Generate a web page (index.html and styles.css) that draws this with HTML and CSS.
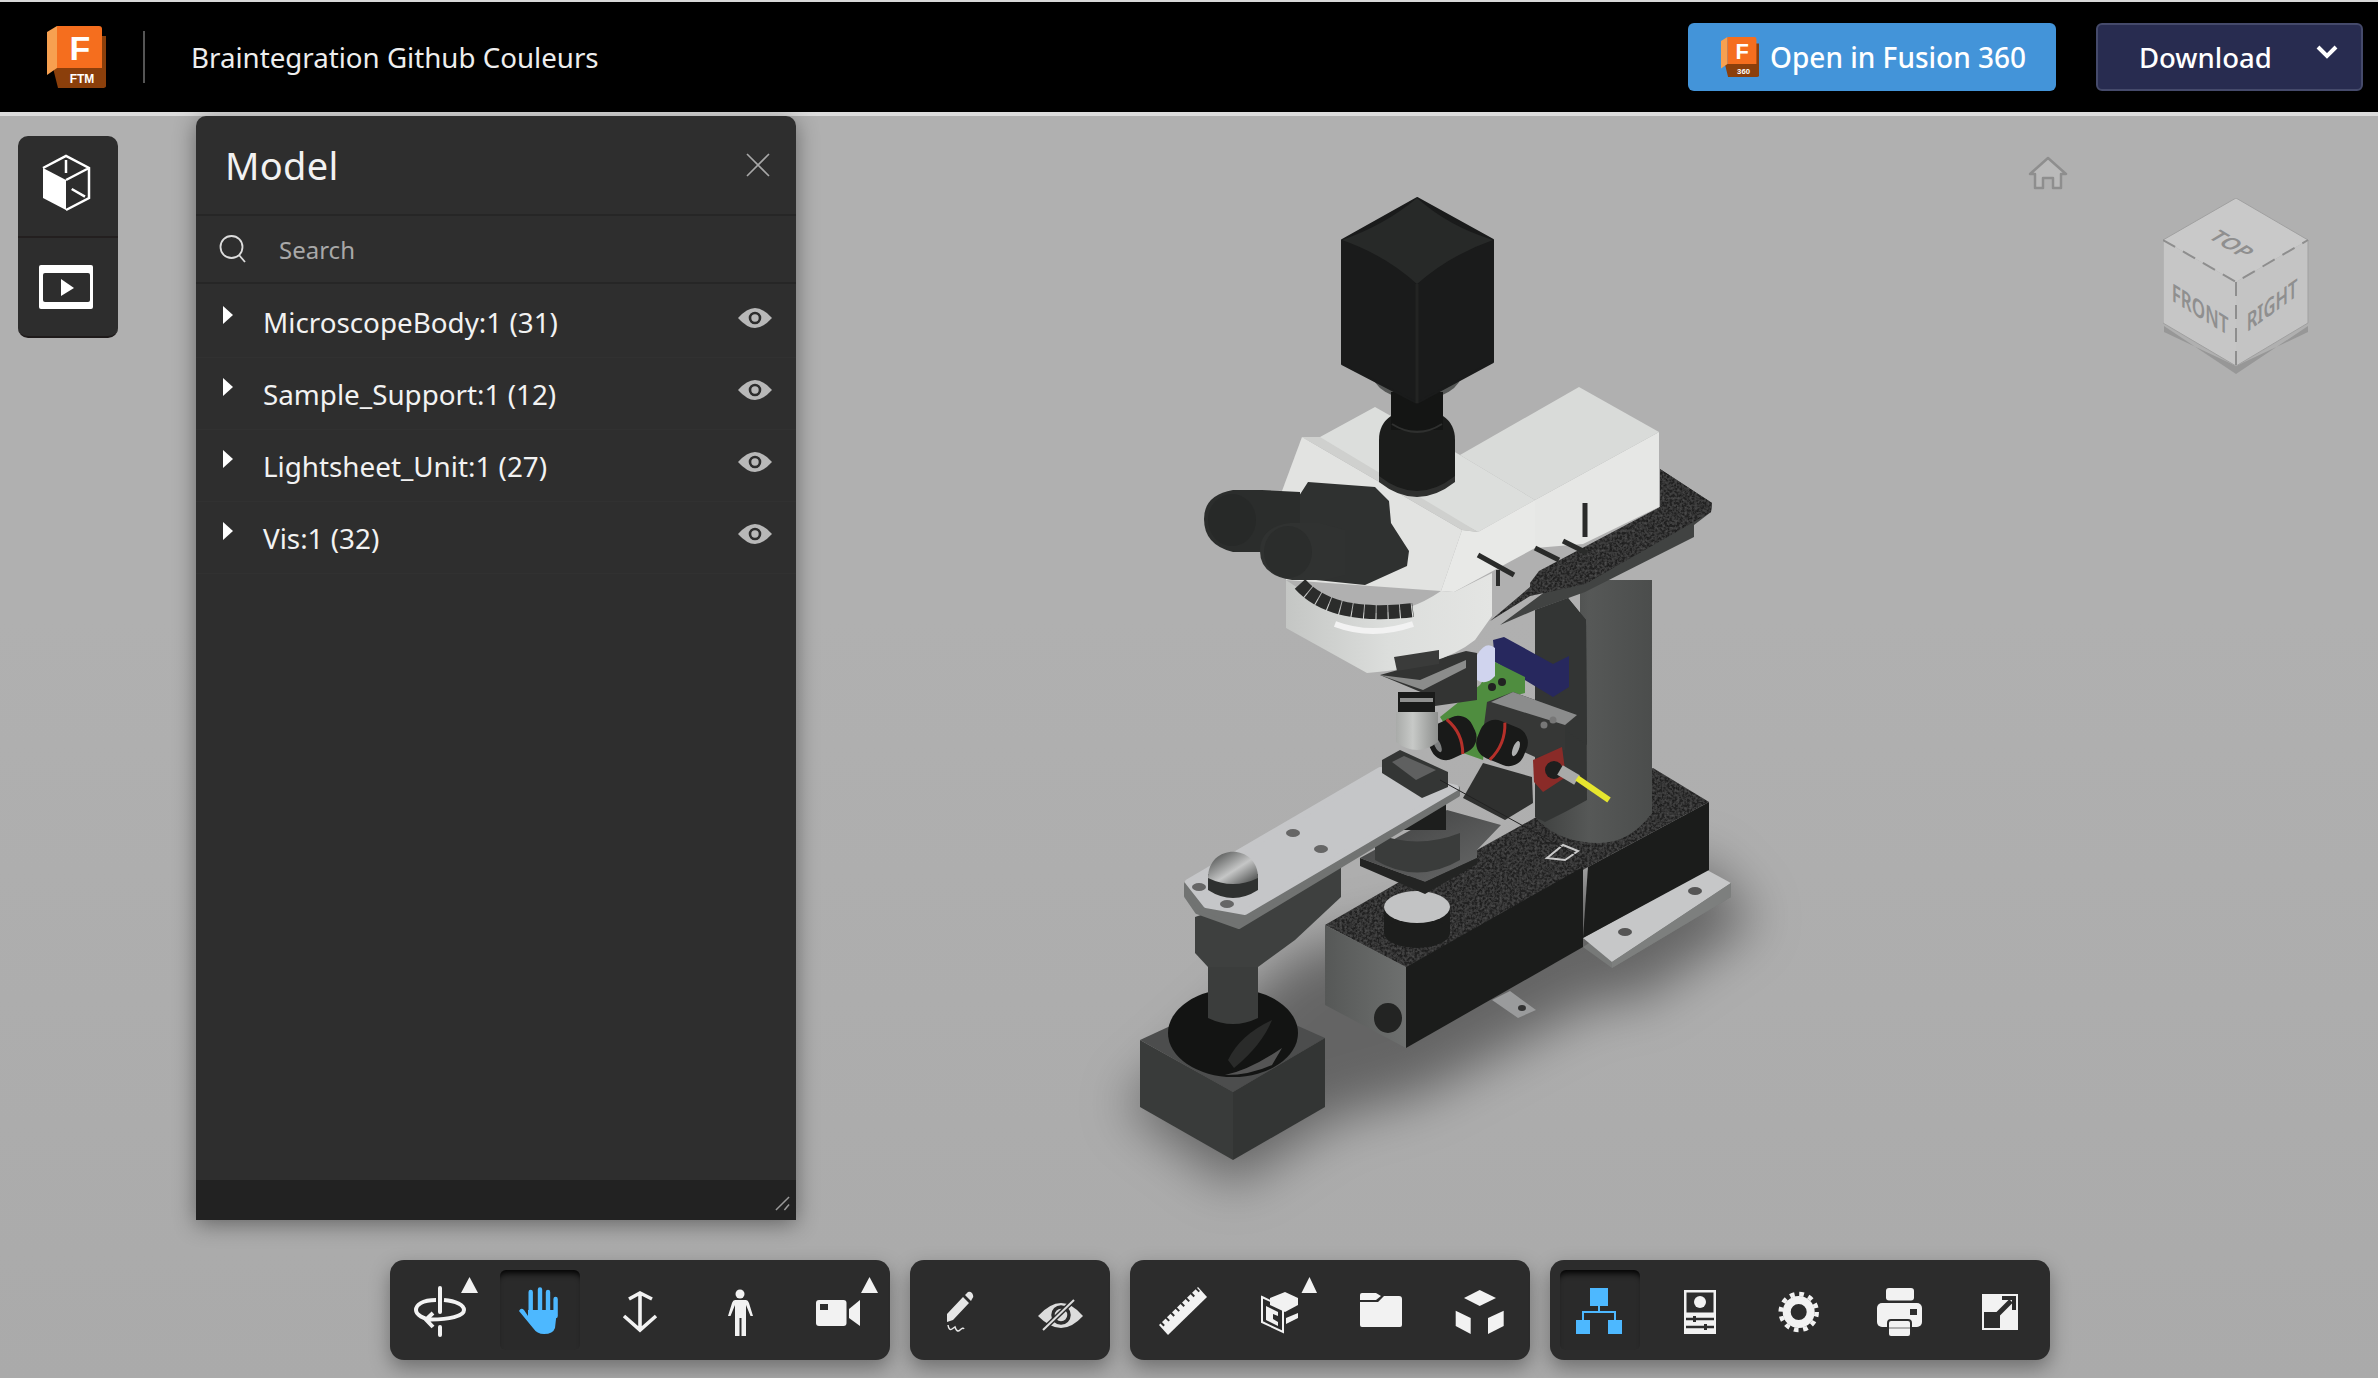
FILE: index.html
```html
<!DOCTYPE html>
<html lang="en">
<head>
  <meta charset="UTF-8">
  <title>Braintegration Github Couleurs</title>
  <link rel="stylesheet" href="styles.css">
</head>
<body>

  <header class="topbar">
    <svg class="logo" viewBox="0 0 59 62">
      <path d="M6 42 L11 62 H55 Q59 62 59 60 V10 H50 V42Z" fill="#8b3f0b"/>
      <path d="M0 6 L10 0 V42 L0 49Z" fill="#f7a050"/>
      <path d="M10 0 H52 Q55 0 55 3 V42 H10Z" fill="#f56e1e"/>
      <text class="logo-f" x="33" y="34">F</text>
      <text class="logo-sub" x="35" y="57">FTM</text>
    </svg>
    <div class="divider"></div>
    <div class="doc-title">Braintegration Github Couleurs</div>
    <button class="btn-open">
      <svg class="logo-small" viewBox="0 0 59 62">
        <path d="M6 42 L11 62 H55 Q59 62 59 60 V10 H50 V42Z" fill="#8b3f0b"/>
        <path d="M0 6 L10 0 V42 L0 49Z" fill="#f7a050"/>
        <path d="M10 0 H52 Q55 0 55 3 V42 H10Z" fill="#f56e1e"/>
        <text class="logo-f" x="33" y="34">F</text>
        <text class="logo-sub" x="35" y="58">360</text>
      </svg>
      Open in Fusion 360
    </button>
    <button class="btn-download">
      Download
      <svg class="chevron" viewBox="0 0 22 14"><path d="M2 2 L11 11 L20 2" fill="none" stroke="#fff" stroke-width="4"/></svg>
    </button>
  </header>

  <main class="viewer">

    <!-- the model, drawn in page coordinates -->
    <svg class="model" viewBox="0 116 2378 1262">
      <defs>
        <filter id="soft" x="-30%" y="-30%" width="160%" height="160%"><feGaussianBlur stdDeviation="26"/></filter>
        <filter id="pebble" x="0" y="0" width="100%" height="100%">
          <feTurbulence type="fractalNoise" baseFrequency="0.4" numOctaves="2" seed="4"/>
          <feColorMatrix values="0 0 0 0 0.14  0 0 0 0 0.14  0 0 0 0 0.14  0 0 0 0.9 -0.3"/>
          <feComposite in2="SourceGraphic" operator="in"/>
          <feMerge><feMergeNode in="SourceGraphic"/><feMergeNode/></feMerge>
        </filter>
        <linearGradient id="column" x1="0" x2="1" y1="0" y2="0">
          <stop offset="0" stop-color="#3f4140"/><stop offset=".45" stop-color="#565857"/><stop offset="1" stop-color="#4b4d4c"/>
        </linearGradient>
        <linearGradient id="nose" x1="0" x2="1" y1="0" y2="0">
          <stop offset="0" stop-color="#c4c6c4"/><stop offset=".5" stop-color="#dcdedc"/><stop offset="1" stop-color="#e4e5e3"/>
        </linearGradient>
        <linearGradient id="silver" x1="0" x2="1" y1="0" y2="0">
          <stop offset="0" stop-color="#a9aba9"/><stop offset=".4" stop-color="#c7c9c7"/><stop offset="1" stop-color="#8d8f8d"/>
        </linearGradient>
        <linearGradient id="dome" x1="0" x2="1" y1="0" y2="1">
          <stop offset="0" stop-color="#3c3e3d"/><stop offset=".55" stop-color="#c5c6c6"/><stop offset="1" stop-color="#3c3e3d"/>
        </linearGradient>
        <linearGradient id="sideFace" x1="0" x2="1" y1="0" y2="0">
          <stop offset="0" stop-color="#565857"/><stop offset="1" stop-color="#6e706f"/>
        </linearGradient>
        <linearGradient id="plate" x1="0" x2="1" y1="0" y2="1">
          <stop offset="0" stop-color="#3d3e3e"/><stop offset="1" stop-color="#6a6b6b"/>
        </linearGradient>
      </defs>

      <!-- floor shadow -->
      <polygon filter="url(#soft)" fill="#000" fill-opacity=".42" points="1125,1105 1233,1185 1335,1118 1420,1095 1600,1000 1640,1000 1755,920 1700,860 1300,950"/>

      <!-- base -->
      <polygon points="1583,947 1612,968 1731,897 1731,883 1700,870" fill="#777978"/>
      <polygon points="1583,938 1707,870 1731,883 1612,962" fill="#c6c7c8"/>
      <polygon points="1612,962 1731,883 1731,897 1612,968" fill="#7d7f7e"/>
      <ellipse cx="1695" cy="891" rx="7" ry="4" fill="#555"/>
      <ellipse cx="1625" cy="932" rx="7" ry="4" fill="#555"/>
      <polygon points="1588,867 1709,802 1709,870 1583,938" fill="#1b1c1b"/>
      <polygon points="1325,925 1420,870 1477,850 1540,815 1653,768 1709,802 1588,867 1406,967" fill="#242424" filter="url(#pebble)"/>
      <polygon points="1325,925 1406,967 1406,1048 1325,1005" fill="url(#sideFace)"/>
      <polygon points="1406,967 1583,867 1583,947 1406,1048" fill="#1b1c1b"/>
      <ellipse cx="1388" cy="1018" rx="14" ry="15" fill="#232423"/>
      <polygon points="1492,1000 1510,991 1536,1010 1518,1018" fill="#9a9b9c"/>
      <ellipse cx="1522" cy="1008" rx="4" ry="3" fill="#333"/>
      <path d="M1547 858 L1563 845 L1578 851 L1565 860 Z" fill="none" stroke="#c9c9c9" stroke-width="2"/>

      <!-- column and rear bracket -->
      <path d="M1580 580 H1652 V813 Q1630 843 1599 843 Q1560 843 1538 820 L1580 800Z" fill="url(#column)"/>
      <polygon points="1535,610 1568,598 1586,620 1587,800 1565,812 1545,822 1535,817" fill="#333534"/>

      <!-- lower stage parts -->
      <polygon points="1483,763 1532,777 1533,803 1505,820 1463,798" fill="#2f302f"/>
      <rect x="1384" y="907" width="66" height="26" fill="#1c1d1c"/>
      <ellipse cx="1417" cy="933" rx="33" ry="15" fill="#1c1d1c"/>
      <ellipse cx="1417" cy="907" rx="33" ry="16" fill="#c2c3c4"/>
      <polygon points="1360,858 1447,810 1501,825 1477,850 1477,858 1425,882" fill="url(#plate)"/>
      <polygon points="1360,858 1425,882 1477,858 1477,864 1425,894 1360,866" fill="#232423"/>
      <path d="M1375 833 V860 Q1417 885 1460 860 V833 Q1417 850 1375 833Z" fill="#3a3c3b"/>
      <rect x="1400" y="795" width="46" height="35" fill="#1d1e1d"/>

      <!-- stage arm, post and foot -->
      <polygon points="1140,1040 1233,997 1325,1038 1233,1092" fill="#4c4d4d"/>
      <polygon points="1140,1040 1233,1092 1233,1160 1140,1107" fill="#393b3a"/>
      <polygon points="1325,1038 1325,1107 1233,1160 1233,1092" fill="#333534"/>
      <ellipse cx="1233" cy="1033" rx="65" ry="44" fill="#131413"/>
      <path d="M1228 1060 Q1240 1035 1272 1020 Q1262 1045 1234 1068Z" fill="#2a2b2a"/>
      <path d="M1225 1075 Q1250 1070 1282 1048 L1272 1065 Q1250 1075 1225 1075Z" fill="#555"/>
      <path d="M1208 960 H1258 V1018 Q1233 1030 1208 1018Z" fill="#3b3d3c"/>
      <polygon points="1195,917 1195,953 1208,967 1258,967 1295,940 1341,897 1341,867" fill="#3e403f"/>
      <polygon points="1186,884 1186,896 1197,912 1239,927 1458,795 1458,788" fill="#717372" stroke="#717372" stroke-width="4" stroke-linejoin="round"/>
      <polygon points="1188,882 1380,770 1456,788 1245,912 1206,905" fill="#c5c6c8" stroke="#c5c6c8" stroke-width="6" stroke-linejoin="round"/>
      <ellipse cx="1293" cy="833" rx="7" ry="4" fill="#666"/>
      <ellipse cx="1321" cy="849" rx="7" ry="4" fill="#666"/>
      <ellipse cx="1199" cy="887" rx="7" ry="4" fill="#666"/>
      <ellipse cx="1227" cy="904" rx="7" ry="4" fill="#666"/>
      <path d="M1208 874 H1258 V890 Q1233 906 1208 890Z" fill="#2f3130"/>
      <path d="M1208 878 C1208 843 1258 843 1258 878 Q1233 890 1208 878Z" fill="url(#dome)"/>

      <!-- focus optics -->
      <polygon points="1535,610 1568,598 1586,620 1587,745 1565,730 1535,700" fill="#333534"/>
      <polygon points="1493,640 1504,637 1553,664 1569,656 1569,687 1553,697 1495,662" fill="#27285e"/>
      <polygon points="1480,685 1495,662 1525,677 1525,693 1490,702 1483,760 1463,753 1440,717" fill="#4f8d3f"/>
      <path d="M1477 655 Q1486 640 1495 648 V676 Q1486 686 1477 680Z" fill="#d0d4ee"/>
      <circle cx="1492" cy="687" r="4" fill="#222"/>
      <circle cx="1502" cy="682" r="4" fill="#222"/>
      <polygon points="1487,702 1513,692 1577,715 1565,727 1565,750 1535,757 1483,733" fill="#363736"/>
      <polygon points="1491,702 1513,692 1577,715 1565,725" fill="#8b8c8c"/>
      <circle cx="1544" cy="725" r="3.5" fill="#777"/>
      <circle cx="1553" cy="720" r="3.5" fill="#777"/>
      <g transform="rotate(-25 1452 738)">
        <rect x="1428" y="719" width="48" height="38" rx="16" fill="#191a19"/>
        <path d="M1455 719 Q1464 738 1455 757" fill="none" stroke="#b5302a" stroke-width="3"/>
        <ellipse cx="1436" cy="738" rx="3" ry="8" fill="#7c7e7e"/>
      </g>
      <g transform="rotate(22 1502 743)">
        <rect x="1477" y="723" width="50" height="40" rx="16" fill="#191a19"/>
        <path d="M1497 723 Q1506 743 1497 763" fill="none" stroke="#b5302a" stroke-width="3"/>
        <ellipse cx="1517" cy="743" rx="3" ry="8" fill="#aeb0b0"/>
      </g>
      <polygon points="1533,760 1562,747 1566,777 1543,792 1534,782" fill="#8a2b28"/>
      <circle cx="1554" cy="770" r="9" fill="#1e1f1e"/>
      <line x1="1560" y1="770" x2="1577" y2="780" stroke="#a9aaa9" stroke-width="11"/>
      <line x1="1577" y1="778" x2="1609" y2="800" stroke="#e6e62e" stroke-width="6"/>

      <!-- nosepiece bracket, objective and plate -->
      <polygon points="1380,675 1423,693 1428,707 1477,700 1477,653 1466,651" fill="#333433"/>
      <polygon points="1380,675 1423,690 1466,668 1466,660 1420,680" fill="#8b8c8b"/>
      <rect x="1398" y="692" width="37" height="22" fill="#1a1b1a"/>
      <rect x="1400" y="698" width="33" height="4" fill="#8f908f"/>
      <path d="M1396 712 H1438 V742 Q1417 758 1396 742Z" fill="url(#silver)"/>
      <polygon points="1382,760 1400,750 1448,772 1448,787 1422,798 1382,773" fill="#343635"/>
      <polygon points="1392,762 1404,756 1436,770 1416,780" fill="#5f6060"/>
      <line x1="1440" y1="780" x2="1585" y2="860" stroke="#222" stroke-width="1"/>
      <polygon points="1660,469 1712,503 1711,512 1694,525 1694,537 1585,592 1535,610 1500,625 1660,507" fill="#414342"/>
      <polygon points="1660,469 1712,503 1711,512 1585,584 1530,596 1490,621 1530,587 1530,583 1539,571 1660,507" fill="#202020" filter="url(#pebble)"/>

      <!-- microscope head -->
      <polygon points="1659,432 1659,507 1583,544 1535,548 1535,500" fill="#e6e7e5"/>
      <polygon points="1579,387 1659,432 1535,500 1460,455" fill="#d9dbd9"/>
      <polygon points="1320,437 1375,407 1460,455 1535,500 1478,532 1302,437" fill="#dcdedc"/>
      <polygon points="1462,530 1478,532 1535,500 1535,548 1454,592 1441,591" fill="#e8e9e7"/>
      <polygon points="1302,437 1282,491 1286,580 1441,591 1462,530" fill="#e2e3e1"/>
      <polygon points="1302,437 1320,437 1478,532 1462,530" fill="#cfd0ce"/>
      <path d="M1286 580 V628 L1367 673 Q1440 668 1475 640 L1492 616 V573 L1454 592 L1441 591 Q1370 640 1286 580Z" fill="url(#nose)"/>
      <path d="M1300 584 Q1332 620 1413 610" fill="none" stroke="#2b2c2b" stroke-width="14" stroke-dasharray="11 1"/>
      <path d="M1335 624 Q1372 638 1413 624" fill="none" stroke="#f2f2f2" stroke-width="6"/>
      <polygon points="1394,657 1439,650 1439,664 1397,671" fill="#3a3b3a"/>

      <!-- camera and tube -->
      <ellipse cx="1417" cy="372" rx="45" ry="28" fill="#555756"/>
      <path d="M1379 440 Q1379 424 1391 416 H1443 Q1455 424 1455 440 V480 Q1417 510 1379 480Z" fill="#1b1c1b"/>
      <path d="M1379 476 Q1417 506 1455 476 V482 Q1417 512 1379 482Z" fill="#2f302f"/>
      <rect x="1391" y="392" width="52" height="38" fill="#141514"/>
      <path d="M1392 424 Q1417 440 1442 424" fill="none" stroke="#2f302f" stroke-width="2"/>
      <polygon points="1417,198 1493,240 1493,362 1417,403 1342,364 1342,240" fill="#1a1b1b" stroke="#1a1b1b" stroke-width="2" stroke-linejoin="round"/>
      <path d="M1417 198 Q1448 226 1493 240 Q1450 255 1417 284 Q1385 255 1342 240 Q1385 225 1417 198Z" fill="#272928"/>
      <line x1="1417" y1="284" x2="1417" y2="403" stroke="#232423" stroke-width="3"/>

      <!-- eyepieces -->
      <path d="M1308 482 L1375 487 L1389 501 L1391 523 L1409 551 L1407 566 L1365 585 L1316 580 L1280 560 L1290 510Z" fill="#2f3130"/>
      <path d="M1233 490 H1262 L1300 492 V545 L1262 552 H1233 Q1204 545 1204 519 Q1204 495 1233 490Z" fill="#2b2d2c"/>
      <ellipse cx="1232" cy="520" rx="24" ry="26" fill="#272928"/>
      <path d="M1290 523 H1320 L1345 530 V575 L1325 580 H1292 Q1260 575 1260 551 Q1260 527 1290 523Z" fill="#303231"/>
      <ellipse cx="1288" cy="552" rx="24" ry="26" fill="#2b2d2c"/>

      <!-- small levers -->
      <line x1="1478" y1="555" x2="1514" y2="575" stroke="#2a2b2a" stroke-width="5"/>
      <line x1="1498" y1="570" x2="1498" y2="586" stroke="#2a2b2a" stroke-width="4"/>
      <line x1="1535" y1="548" x2="1559" y2="560" stroke="#2a2b2a" stroke-width="5"/>
      <line x1="1563" y1="541" x2="1587" y2="553" stroke="#2a2b2a" stroke-width="5"/>
      <line x1="1585" y1="503" x2="1585" y2="537" stroke="#2a2b2a" stroke-width="5"/>
    </svg>

    <svg class="home" viewBox="0 0 40 34">
      <path d="M20 2 L38 18 H33 V32 H25 V22 H15 V32 H7 V18 H2Z" fill="#bababa" stroke="#8e8e8e" stroke-width="2.5" stroke-linejoin="round"/>
    </svg>

    <svg class="viewcube" viewBox="0 0 146 176">
      <polygon points="1,128 73,176 145,128 145,134 73,168 1,134" fill="#979797"/>
      <polygon points="73,0 145,42 73,84 0,42" fill="#c9c9c9"/>
      <polygon points="0,42 73,84 73,168 0,125" fill="#c6c6c6"/>
      <polygon points="145,42 73,84 73,168 145,125" fill="#c4c4c4"/>
      <path d="M0 42 L73 0 L145 42 V125 L73 168 L0 125Z" fill="none" stroke="#a0a0a0" stroke-width="1"/>
      <path d="M0 42 L73 84 L145 42 M73 84 V168" fill="none" stroke="#8e8e8e" stroke-width="2" stroke-dasharray="14 9"/>
      <text class="cube-label" transform="matrix(.8 .48 -.8 .48 62 50)" text-anchor="middle">TOP</text>
      <text class="cube-label" transform="matrix(.74 .46 0 1.08 37 120)" text-anchor="middle">FRONT</text>
      <text class="cube-label" transform="matrix(.72 -.52 0 1.08 109 116)" text-anchor="middle">RIGHT</text>
    </svg>

    <div class="side-tools">
      <button class="side-btn">
        <svg viewBox="0 0 100 100" width="100" height="100">
          <path d="M25 32 L48 44 V74 L25 62Z" fill="#fff"/>
          <path d="M25 32 L48 20 L71 32 V62 L48 74 M48 44 L71 32 M48 24 V37 M53.7 53 L67 60.7" fill="none" stroke="#fff" stroke-width="2.5"/>
        </svg>
      </button>
      <button class="side-btn">
        <svg viewBox="0 0 100 100" width="100" height="100">
          <rect x="21" y="27" width="54" height="44" rx="2" fill="#fff"/>
          <rect x="25" y="35" width="47" height="29" rx="2" fill="#2d2d2d"/>
          <polygon points="43,41 56,50 43,58" fill="#fff"/>
        </svg>
      </button>
    </div>

    <section class="panel">
      <div class="panel-head">
        <h2>Model</h2>
        <svg class="panel-close" viewBox="0 0 24 24"><path d="M1 1 L23 23 M23 1 L1 23" stroke="#a8a8a8" stroke-width="1.6"/></svg>
      </div>
      <div class="panel-search">
        <svg viewBox="0 0 28 28" width="28" height="28"><circle cx="12.5" cy="12" r="11" fill="none" stroke="#ddd" stroke-width="1.8"/><line x1="20" y1="20" x2="26" y2="27" stroke="#ddd" stroke-width="1.8"/></svg>
        <span>Search</span>
      </div>
      <div class="panel-list">
        <div class="tree-row">
          <span class="caret"></span><span class="tree-name">MicroscopeBody:1 (31)</span>
          <svg class="eye" viewBox="0 0 34 20"><path d="M0 10 Q9 0 17 0 Q25 0 34 10 Q25 20 17 20 Q9 20 0 10Z" fill="#b8b8b8"/><circle cx="17" cy="10" r="5" fill="none" stroke="#2d2d2d" stroke-width="2.6"/></svg>
        </div>
        <div class="tree-row">
          <span class="caret"></span><span class="tree-name">Sample_Support:1 (12)</span>
          <svg class="eye" viewBox="0 0 34 20"><path d="M0 10 Q9 0 17 0 Q25 0 34 10 Q25 20 17 20 Q9 20 0 10Z" fill="#b8b8b8"/><circle cx="17" cy="10" r="5" fill="none" stroke="#2d2d2d" stroke-width="2.6"/></svg>
        </div>
        <div class="tree-row">
          <span class="caret"></span><span class="tree-name">Lightsheet_Unit:1 (27)</span>
          <svg class="eye" viewBox="0 0 34 20"><path d="M0 10 Q9 0 17 0 Q25 0 34 10 Q25 20 17 20 Q9 20 0 10Z" fill="#b8b8b8"/><circle cx="17" cy="10" r="5" fill="none" stroke="#2d2d2d" stroke-width="2.6"/></svg>
        </div>
        <div class="tree-row">
          <span class="caret"></span><span class="tree-name">Vis:1 (32)</span>
          <svg class="eye" viewBox="0 0 34 20"><path d="M0 10 Q9 0 17 0 Q25 0 34 10 Q25 20 17 20 Q9 20 0 10Z" fill="#b8b8b8"/><circle cx="17" cy="10" r="5" fill="none" stroke="#2d2d2d" stroke-width="2.6"/></svg>
        </div>
      </div>
      <div class="panel-foot">
        <svg viewBox="0 0 16 16" width="15" height="15"><path d="M1 15 L15 1 M10 15 L15 9" stroke="#9a9a9a" stroke-width="1.6"/></svg>
      </div>
    </section>

    <div class="toolbar">
      <div class="tool-group">
        <button class="tool">
          <svg viewBox="0 0 80 80">
            <path d="M40 18 V42 M40 57 V65" stroke="#f2f2f2" stroke-width="4" stroke-linecap="round"/>
            <path d="M36 30 C22 30 16 35 16 40 C16 45 24 49 31 50 M44 30 C56 31 64 35 64 40 C64 46 50 50 27 49.5 M33 43 L26 49.5 L33 57" fill="none" stroke="#f2f2f2" stroke-width="4"/>
            <polygon points="69.5,7 61,23 78,23" fill="#f2f2f2"/>
          </svg>
        </button>
        <button class="tool active">
          <svg viewBox="0 0 80 80">
            <path d="M30.7 44 V22 M40 44 V19.5 M48 44 V22 M55.6 46 V29" stroke="#4db8ff" stroke-width="4.4" stroke-linecap="round"/>
            <path d="M28 40 L57 40 L55 58 Q53 64 44 64 Q37 64 33 58 L19 41 Q21 37 24 40 L28 46Z" fill="#4db8ff"/>
          </svg>
        </button>
        <button class="tool">
          <svg viewBox="0 0 80 80">
            <path d="M40 23 V58 M29 29 L40 23 L52 29 M24 46 L40 60 L56 46" fill="none" stroke="#f2f2f2" stroke-width="3.6"/>
          </svg>
        </button>
        <button class="tool">
          <svg viewBox="0 0 80 80">
            <ellipse cx="40" cy="24" rx="4.5" ry="4.5" fill="#f2f2f2"/>
            <path d="M34 30 h12 q2 0 3 3 l4 13 h-2.5 l-4.5 -11 v31 h-4.5 v-18 h-2 v18 h-4.5 v-31 l-4.5 11 h-2.5 l4 -13 q1 -3 3 -3z" fill="#f2f2f2"/>
          </svg>
        </button>
        <button class="tool">
          <svg viewBox="0 0 80 80">
            <rect x="16" y="30" width="30.5" height="26" rx="3" fill="#f2f2f2"/>
            <rect x="20" y="34" width="8" height="6" fill="#2d2d2d"/>
            <polygon points="49,39 60,30 60,56 49,48" fill="#f2f2f2"/>
            <polygon points="69.5,7 61,23 78,23" fill="#f2f2f2"/>
          </svg>
        </button>
      </div>
      <div class="tool-group">
        <button class="tool">
          <svg viewBox="0 0 80 80">
            <path d="M27 52 V44 L43 27 L49 33 L33 50Z M45 25 L48 22 Q50 21 52 23 L53 25 Q54 27 52 29 L51 31Z" fill="#e6e6e6"/>
            <path d="M28 55 q1 6 4 4 t3 -2 q2 6 5 3 t4 -1" fill="none" stroke="#e6e6e6" stroke-width="1.5"/>
          </svg>
        </button>
        <button class="tool">
          <svg viewBox="0 0 80 80">
            <path d="M18 46 Q30 33 41 33 Q52 33 63 46 Q52 58 41 58 Q30 58 18 46Z" fill="#dcdcdc"/>
            <circle cx="41" cy="45" r="8" fill="none" stroke="#2d2d2d" stroke-width="3.5"/>
            <line x1="54" y1="30" x2="23" y2="60" stroke="#2d2d2d" stroke-width="5"/>
            <line x1="54" y1="30" x2="23" y2="60" stroke="#dcdcdc" stroke-width="2"/>
          </svg>
        </button>
      </div>
      <div class="tool-group">
        <button class="tool">
          <svg viewBox="0 0 80 80">
            <polygon points="19,55 58,17 67,27 28,65" fill="#f2f2f2"/>
            <line x1="21" y1="54" x2="59" y2="17" stroke="#2d2d2d" stroke-width="7" stroke-dasharray="2 5"/>
          </svg>
        </button>
        <button class="tool">
          <svg viewBox="0 0 80 80">
            <polygon points="22,27 43,37 43,62 22,52" fill="none" stroke="#f2f2f2" stroke-width="2"/>
            <path d="M26 36 L38 42 V46 L33 44 V49 L38 52 V56 L26 50Z" fill="#f2f2f2"/>
            <polygon points="30,28 45,22 58,28 58,35 45,42 30,35" fill="#f2f2f2"/>
            <polygon points="46,48 58,43 58,48 46,54" fill="#f2f2f2"/>
            <polygon points="69.5,7 61.5,23 77,23" fill="#f2f2f2"/>
          </svg>
        </button>
        <button class="tool">
          <svg viewBox="0 0 80 80">
            <path d="M20 25 q0 -2 2 -2 h14 l5 3 l-5 4 h-16z" fill="#f2f2f2"/>
            <path d="M20 32 h18 l6 -6 h15 q3 0 3 3 v26 q0 2 -2 2 h-38 q-2 0 -2 -2z" fill="#f2f2f2"/>
          </svg>
        </button>
        <button class="tool">
          <svg viewBox="0 0 80 80">
            <polygon points="39.7,20 56,28 39.7,36 24,28" fill="#f2f2f2"/>
            <polygon points="15.7,40.7 30.7,48 30.7,64 15.7,56" fill="#f2f2f2"/>
            <polygon points="63.7,40.7 48,48 48,64 63.7,56" fill="#f2f2f2"/>
          </svg>
        </button>
      </div>
      <div class="tool-group">
        <button class="tool active">
          <svg viewBox="0 0 80 80">
            <rect x="30" y="18" width="18" height="18" fill="#4db8ff"/>
            <rect x="16" y="50" width="14" height="14" fill="#4db8ff"/>
            <rect x="48" y="50" width="14" height="14" fill="#4db8ff"/>
            <path d="M39 36 V42 M23 50 V42 H55 V50" fill="none" stroke="#4db8ff" stroke-width="2"/>
          </svg>
        </button>
        <button class="tool">
          <svg viewBox="0 0 80 80">
            <rect x="24" y="20" width="32" height="44" fill="#f2f2f2"/>
            <rect x="26.5" y="22.5" width="27" height="20" fill="#2d2d2d"/>
            <ellipse cx="40" cy="32" rx="6" ry="6" fill="#f2f2f2"/>
            <path d="M26 49 H54 M26 57 H54" stroke="#2d2d2d" stroke-width="2.5"/>
            <rect x="33" y="46" width="3" height="6" fill="#2d2d2d"/>
            <rect x="44" y="54" width="3" height="6" fill="#2d2d2d"/>
          </svg>
        </button>
        <button class="tool">
          <svg viewBox="0 0 80 80">
            <circle cx="38.7" cy="42" r="12" fill="none" stroke="#f2f2f2" stroke-width="8"/>
            <circle cx="38.7" cy="42" r="18" fill="none" stroke="#f2f2f2" stroke-width="4.5" stroke-dasharray="4.7 4.725"/>
          </svg>
        </button>
        <button class="tool">
          <svg viewBox="0 0 80 80">
            <rect x="26" y="18" width="28" height="12.5" rx="3" fill="#f2f2f2"/>
            <rect x="17" y="33" width="45" height="24" rx="5" fill="#f2f2f2"/>
            <rect x="50" y="39" width="7" height="6" fill="#2d2d2d"/>
            <rect x="28" y="50" width="23" height="17" rx="3" fill="#f2f2f2" stroke="#2d2d2d" stroke-width="2"/>
            <line x1="29" y1="58" x2="50" y2="58" stroke="#9a9a9a" stroke-width="1.5"/>
          </svg>
        </button>
        <button class="tool">
          <svg viewBox="0 0 80 80">
            <rect x="22" y="24" width="36" height="36" fill="#f2f2f2"/>
            <rect x="24" y="42" width="16" height="16" fill="#2d2d2d"/>
            <polygon points="42,26 56,26 56,40 52,40 52,30 42,30" fill="#2d2d2d"/>
            <line x1="51" y1="31" x2="36" y2="46" stroke="#2d2d2d" stroke-width="5"/>
          </svg>
        </button>
      </div>
    </div>
  </main>

</body>
</html>
```

FILE: styles.css
```css
* {
  box-sizing: border-box;
}
html, body {
  margin: 0;
  height: 100%;
}
body {
  display: flex;
  flex-direction: column;
  font-family: "Noto Sans", Arial, sans-serif;
  border-top: 2px solid #d8d8d8;
  background: #b0b0b0;
  overflow: hidden;
}
button {
  font-family: inherit;
  cursor: pointer;
}

/* top bar */
.topbar {
  display: flex;
  align-items: center;
  flex: 0 0 114px;
  padding: 0 15px 0 47px;
  background: #000;
  border-bottom: 4px solid #dcdcdc;
  color: #fff;
}
.logo {
  width: 59px;
  height: 62px;
}
.logo-f {
  font: bold 34px "Liberation Sans", Arial, sans-serif;
  fill: #fff;
  text-anchor: middle;
}
.logo-sub {
  font: bold 12px "Liberation Sans", Arial, sans-serif;
  fill: #fff;
  text-anchor: middle;
}
.divider {
  width: 2px;
  height: 52px;
  margin: 0 46px 0 37px;
  background: #555;
}
.doc-title {
  flex: 1;
  font-size: 27.7px;
  color: #eee;
}
.btn-open {
  display: flex;
  align-items: center;
  gap: 11px;
  width: 368px;
  height: 68px;
  margin-right: 40px;
  padding: 0 0 0 33px;
  border: none;
  border-radius: 6px;
  background: #4394d9;
  color: #fff;
  font-size: 28px;
  font-weight: 500;
}
.logo-small {
  width: 38px;
  height: 40px;
}
.btn-download {
  display: flex;
  align-items: center;
  width: 267px;
  height: 68px;
  padding: 0 0 0 41px;
  border: 2px solid #454a6b;
  border-radius: 6px;
  background: #282c50;
  color: #fff;
  font-size: 27.5px;
  font-weight: 500;
}
.chevron {
  width: 22px;
  height: 14px;
  margin: 0 0 10px 44px;
}

/* viewer */
.viewer {
  position: relative;
  flex: 1;
  display: flex;
  align-items: flex-start;
  padding-left: 18px;
  background: linear-gradient(#b0b0b0 40%, #aaaaaa 100%);
}
.model {
  position: absolute;
  left: 0;
  top: 0;
  width: 2378px;
  height: 1262px;
}
.home {
  position: absolute;
  left: 2028px;
  top: 40px;
  width: 40px;
  height: 34px;
}
.viewcube {
  position: absolute;
  left: 2163px;
  top: 82px;
  width: 146px;
  height: 176px;
}
.cube-label {
  font: 600 23px "Noto Sans", Arial, sans-serif;
  fill: #8f8f8f;
}

/* left tools */
.side-tools {
  position: relative;
  display: flex;
  flex-direction: column;
  width: 100px;
  margin-top: 20px;
  border-bottom: 2px solid #1e1a1a;
  border-radius: 10px;
  background: #2d2d2d;
  overflow: hidden;
}
.side-btn {
  display: block;
  width: 100px;
  height: 100px;
  padding: 0;
  border: none;
  background: none;
}
.side-btn + .side-btn {
  border-top: 2px solid #231f1f;
}
.side-btn svg {
  display: block;
}

/* model browser */
.panel {
  position: relative;
  display: flex;
  flex-direction: column;
  width: 600px;
  height: 1104px;
  margin-left: 78px;
  border-radius: 10px 10px 0 0;
  background: #2e2e2e;
  box-shadow: 0 4px 22px rgba(0, 0, 0, 0.42);
  color: #f2f2f2;
}
.panel-head {
  display: flex;
  align-items: center;
  justify-content: space-between;
  flex: 0 0 100px;
  padding: 0 26px 0 29px;
  border-bottom: 2px solid #262626;
}
.panel-head h2 {
  margin: 0;
  font-size: 38px;
  font-weight: 400;
  letter-spacing: 0.3px;
}
.panel-close {
  width: 24px;
  height: 24px;
}
.panel-search {
  display: flex;
  align-items: center;
  gap: 32px;
  flex: 0 0 68px;
  padding: 0 0 0 23px;
  border-bottom: 2px solid #262626;
  color: #a8a8a8;
  font-size: 24px;
}
.panel-list {
  flex: 1;
  padding-top: 2px;
}
.tree-row {
  display: flex;
  align-items: center;
  height: 72px;
  padding: 0 24px 0 27px;
  border-bottom: 1px solid #313131;
}
.caret {
  width: 0;
  height: 0;
  margin: 0 30px 14px 0;
  border-top: 9px solid transparent;
  border-bottom: 9px solid transparent;
  border-left: 10px solid #fff;
}
.tree-name {
  flex: 1;
  font-size: 27.8px;
}
.eye {
  width: 34px;
  height: 20px;
  margin-bottom: 8px;
}
.panel-foot {
  display: flex;
  align-items: flex-end;
  justify-content: flex-end;
  flex: 0 0 40px;
  padding: 0 6px 9px 0;
  background: #222;
}

/* bottom toolbar */
.toolbar {
  position: absolute;
  left: 390px;
  bottom: 18px;
  display: flex;
  gap: 20px;
}
.tool-group {
  display: flex;
  gap: 20px;
  padding: 10px;
  border-radius: 14px;
  background: #2c2c2c;
  box-shadow: 0 8px 20px rgba(0, 0, 0, 0.35);
}
.tool {
  width: 80px;
  height: 80px;
  padding: 0;
  border: none;
  border-radius: 6px;
  background: none;
}
.tool svg {
  display: block;
  width: 80px;
  height: 80px;
}
.tool.active {
  background: #2a2a2a;
  box-shadow: inset 0 7px 6px -4px #000;
}
```
